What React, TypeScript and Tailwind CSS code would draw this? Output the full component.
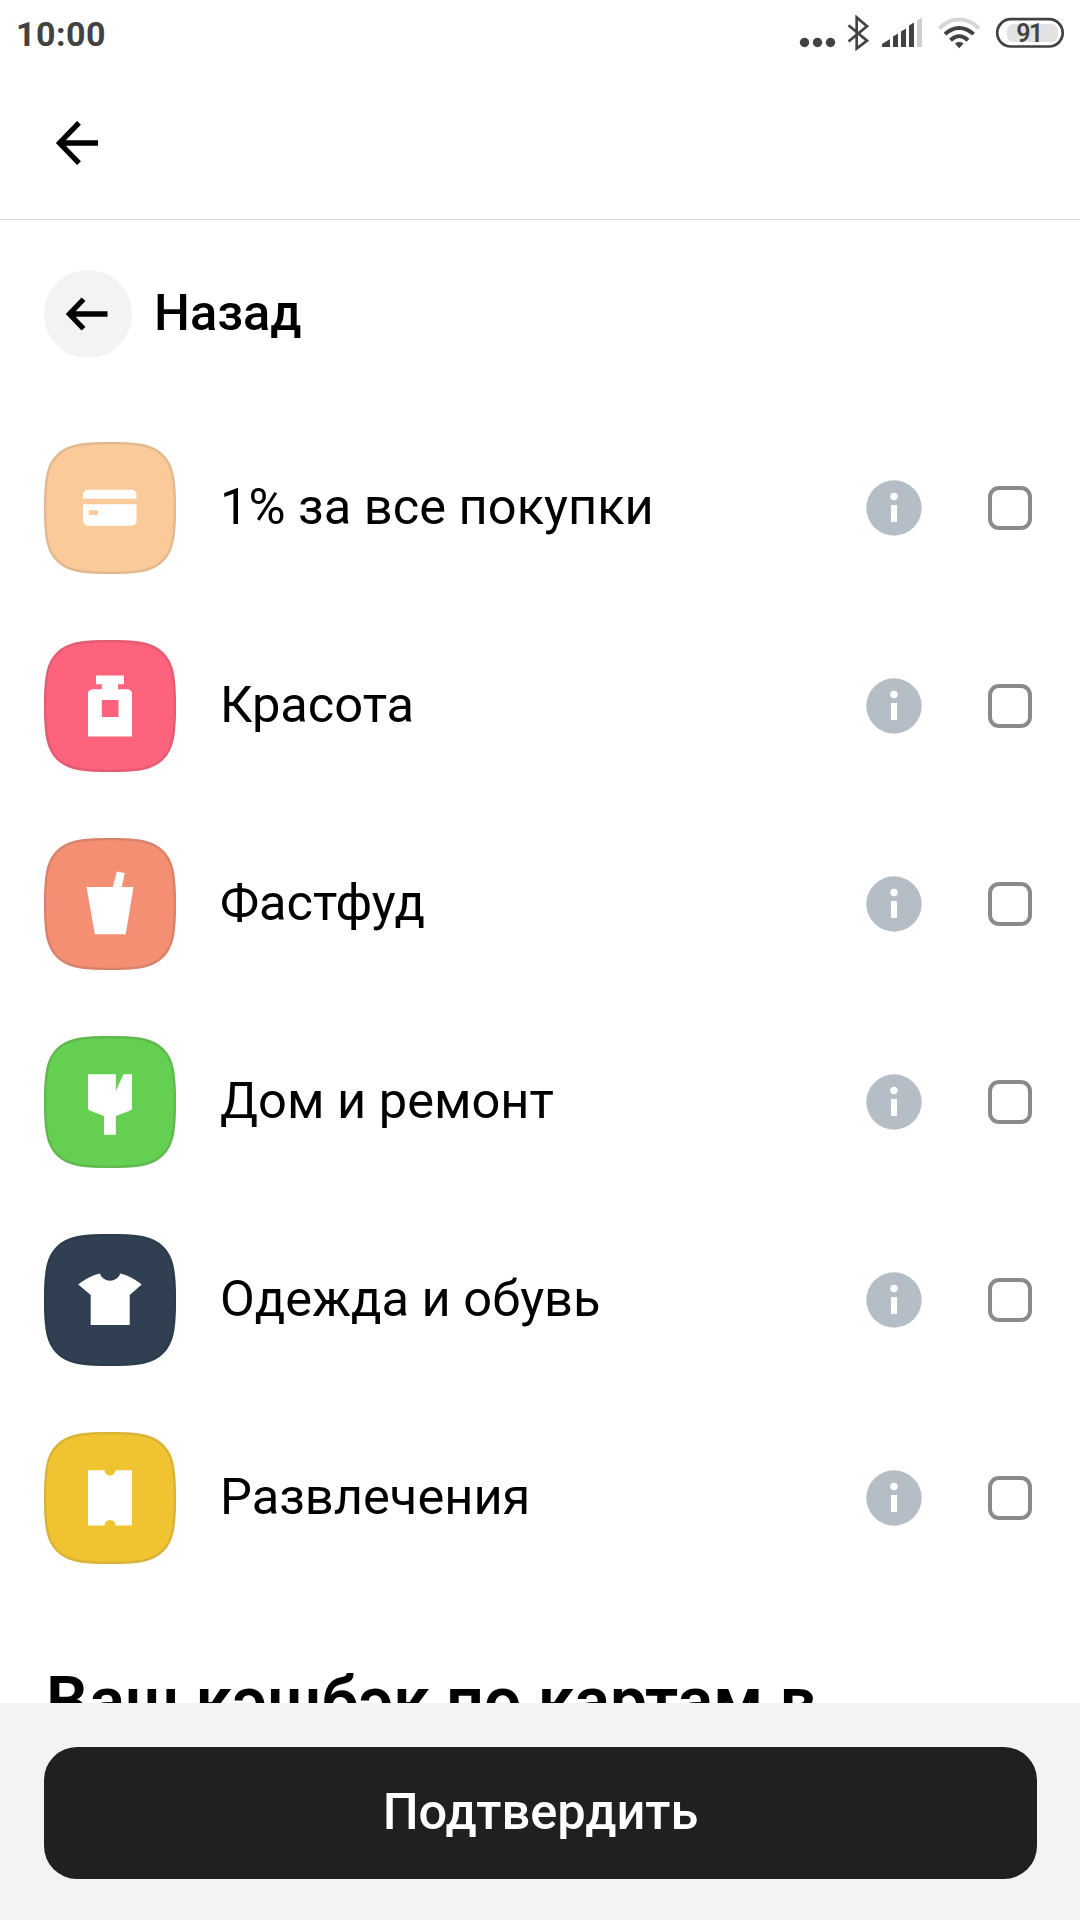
import type { ReactNode } from "react";

type Category = { label: string; fill: string; edge: string; glyph: ReactNode };

const categories: Category[] = [
  {
    label: "1% за все покупки",
    fill: "#fbca9b",
    edge: "#e4b88f",
    glyph: (
      <>
        <path d="M39 56.700v-4a5 5 0 0 1 5-5h43.500a5 5 0 0 1 5 5v4z" />
        <path
          fillRule="evenodd"
          d="M39 62.200h53.500V78.700a5 5 0 0 1-5 5H44a5 5 0 0 1-5-5zM44.800 68.200v4.700h9.200v-4.700z"
        />
      </>
    ),
  },
  {
    label: "Красота",
    fill: "#fe637d",
    edge: "#e35c73",
    glyph: (
      <path
        fillRule="evenodd"
        d="M52 35.500h28v8.700h-6v5h9.500a4.500 4.500 0 0 1 4.500 4.500V96.500H44V53.700a4.500 4.500 0 0 1 4.500-4.500H57.800v-5H52zM57.800 60v17H74.500V60z"
      />
    ),
  },
  {
    label: "Фастфуд",
    fill: "#f48f73",
    edge: "#d9836b",
    glyph: <path d="M42.500 49h26.300l4-15.500 8 1.600L77.800 49H89.500L81.700 96.200H50.800z" />,
  },
  {
    label: "Дом и ремонт",
    fill: "#65cf51",
    edge: "#5fb94e",
    glyph: (
      <path d="M44 38.200h27.800V55L79.500 38.200H88V72.200a2.500 2.500 0 0 1-1.600 2.200L71.800 80.100V98.700H60V80.100L45.600 74.400A2.500 2.500 0 0 1 44 72.200z" />
    ),
  },
  {
    label: "Одежда и обувь",
    fill: "#304052",
    edge: "#2d3c4b",
    glyph: (
      <path d="M34.300 50.500C41 45 49 41 56 39.500C58.500 49 73.500 49 76.200 39.500C83 41 91 45 97.700 50.500L85.700 61V91H46.700V61z" />
    ),
  },
  {
    label: "Развлечения",
    fill: "#f0c431",
    edge: "#d9b336",
    glyph: (
      <path d="M44 38.200H60.500a5.500 5.500 0 0 0 11 0H88V93.500H71.500a5.500 5.500 0 0 0-11 0H44z" />
    ),
  },
];

function Tile({ fill, edge, glyph }: Omit<Category, "label">) {
  return (
    <svg viewBox="0 0 132 132" className="size-[132px] shrink-0">
      <path
        d="M66 1.100C97 1.100 109.500 4 118.700 13.300C128 22.500 130.900 35 130.900 66C130.900 97 128 109.500 118.700 118.700C109.500 128 97 130.900 66 130.900C35 130.900 22.500 128 13.300 118.700C4 109.500 1.100 97 1.100 66C1.100 35 4 22.500 13.300 13.300C22.500 4 35 1.100 66 1.100Z"
        fill={fill}
        stroke={edge}
        strokeWidth="2.400"
      />
      <g fill="#fff">{glyph}</g>
    </svg>
  );
}

function StatusBar() {
  return (
    <div className="flex h-[66px] shrink-0 items-center justify-between pl-4 text-[#424242]">
      <span className="pt-px text-[34px] leading-[66px] font-bold tracking-[0.500px]">10:00</span>
      <svg viewBox="780 0 300 66" className="h-[66px] w-[300px]" fill="currentColor">
        <circle cx="804.500" cy="42.500" r="4.700" />
        <circle cx="817.500" cy="42.500" r="4.700" />
        <circle cx="830.500" cy="42.500" r="4.700" />
        <path
          d="M848.500 25.200L867 40.700L856.700 48.500V17.500L867 26.200L848.500 41.500"
          fill="none"
          stroke="currentColor"
          strokeWidth="2.700"
        />
        <path d="M882 47v-3l8-5v8zM893 47V36.500l5-3V47zM901 47V31.500l5-3V47zM909 47V25.500l5-3V47z" />
        <path d="M917 47V20.500l5-3V47z" fill="#cfcfcf" />
        <g fill="none" stroke="currentColor" strokeWidth="4">
          <path d="M939.300 28.500C950.500 16.500 968 16.500 979 28.500" stroke="#d6d6d6" />
          <path d="M945 34.200C953.500 25.800 965 25.800 973.500 34.200" />
          <path d="M950.500 40.200C956 34.800 962.500 34.800 968 40.200" />
        </g>
        <path d="M955 43.800C957 41.400 961.500 41.400 963.500 43.800L959.200 48.200z" />
        <rect x="997.200" y="19.200" width="65.500" height="27.300" rx="13.650" fill="none" stroke="currentColor" strokeWidth="2.700" />
        <rect x="1007" y="24" width="51" height="18" rx="6" fill="#e2e2e2" />
        <text x="1029" y="42" textAnchor="middle" fontSize="25" fontWeight="600" letterSpacing="-1.500">
          91
        </text>
      </svg>
    </div>
  );
}

export default function App() {
  return (
    <div className="flex h-[1920px] w-[1080px] flex-col overflow-hidden bg-white font-['Roboto',sans-serif] text-black">
      <StatusBar />
      <header className="flex h-[154px] shrink-0 items-center border-b border-[#dcdcdc] pl-[55px]">
        <button aria-label="Закрыть">
          <svg viewBox="0 0 44 44" className="size-11" fill="none" stroke="currentColor" strokeWidth="5.300">
            <path d="M43 22H4M24 1.800L4.500 22L24 42.200" />
          </svg>
        </button>
      </header>
      <main className="min-h-0 flex-1 overflow-hidden px-11 pt-[50px]">
        <button className="flex items-center gap-[22px]">
          <span className="flex size-[88px] items-center justify-center rounded-full bg-[#f2f3f5]">
            <svg viewBox="0 0 44 44" className="size-11" fill="none" stroke="currentColor" strokeWidth="5.300">
              <path d="M41.500 22H4M17.500 7.200L3.500 22L17.500 36.800" />
            </svg>
          </span>
          <span className="pb-0.5 text-[50.600px] leading-[60px] font-medium">Назад</span>
        </button>
        <ul className="mt-[84px] flex flex-col gap-[66px]">
          {categories.map(({ label, ...tile }) => (
            <li key={label} className="flex items-center">
              <Tile {...tile} />
              <span className="ml-11 flex-1 pb-0.5 text-[50.600px] leading-[60px]">{label}</span>
              <svg viewBox="0 0 56 56" className="mr-[66px] size-14">
                <circle cx="28" cy="28" r="27.700" fill="#b5bdc6" />
                <circle cx="28" cy="16.500" r="3.700" fill="#fff" />
                <path d="M25 25h6v17h-6z" fill="#fff" />
              </svg>
              <button
                role="checkbox"
                aria-checked="false"
                aria-label={label}
                className="mr-1 size-11 rounded-[11px] border-4 border-[#8a8a8d]"
              />
            </li>
          ))}
        </ul>
        <h2 className="mt-[99px] pl-[2px] text-[66px] leading-[77px] font-semibold whitespace-nowrap first-letter:tracking-[1.500px]">
          Ваш кэшбэк по картам в
        </h2>
      </main>
      <footer className="h-[217px] shrink-0 bg-[#f2f3f5] px-11 pt-11">
        <button className="h-[132px] w-[993px] rounded-[33px] bg-[#202022] pb-0.5 text-[50.600px] font-medium text-white">
          Подтвердить
        </button>
      </footer>
    </div>
  );
}
